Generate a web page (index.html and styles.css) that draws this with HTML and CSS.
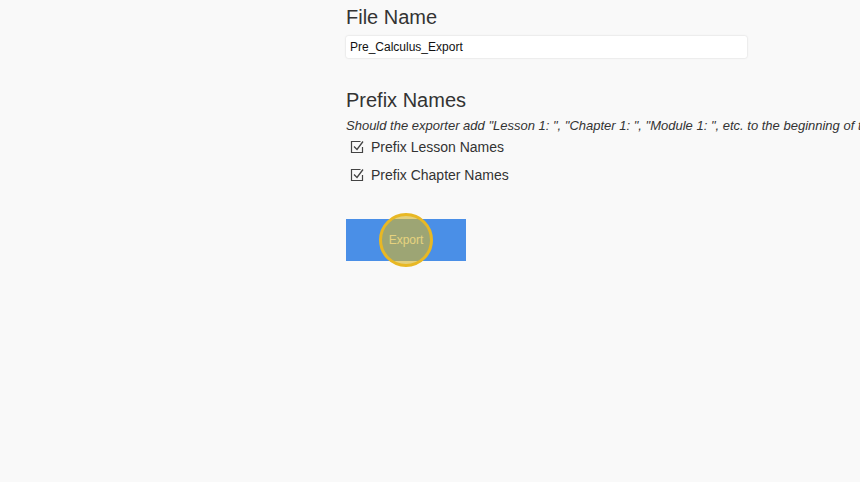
FILE: index.html
```html
<!DOCTYPE html>
<html>
<head>
<meta charset="utf-8">
<link rel="stylesheet" href="styles.css">
</head>
<body>
<main class="form">
  <section class="group">
    <h2 class="label">File Name</h2>
    <input class="text-input" type="text" value="Pre_Calculus_Export">
  </section>
  <section class="group prefix">
    <h2 class="label">Prefix Names</h2>
    <p class="hint">Should the exporter add "Lesson 1: ", "Chapter 1: ", "Module 1: ", etc. to the beginning of the names?</p>
    <label class="check">
      <svg class="box" viewBox="0 0 14 14" width="14" height="14"><path d="M10.5 1.5H1.5v11h11V7" fill="none" stroke="#444" stroke-width="1.2"/><path d="M4 6.5l3 3L13 1.5" fill="none" stroke="#444" stroke-width="1.3"/></svg>
      <span>Prefix Lesson Names</span>
    </label>
    <label class="check">
      <svg class="box" viewBox="0 0 14 14" width="14" height="14"><path d="M10.5 1.5H1.5v11h11V7" fill="none" stroke="#444" stroke-width="1.2"/><path d="M4 6.5l3 3L13 1.5" fill="none" stroke="#444" stroke-width="1.3"/></svg>
      <span>Prefix Chapter Names</span>
    </label>
  </section>
  <div class="actions">
    <button class="btn">Export<span class="spot"></span></button>
  </div>
</main>
</body>
</html>
```
FILE: styles.css
```css
html, body {
  margin: 0;
  padding: 0;
  background: #f9f9f9;
  overflow: hidden;
}
body {
  width: 860px;
  height: 482px;
  font-family: "Liberation Sans", Arial, sans-serif;
  color: #333;
}
.form {
  margin-left: 346px;
  padding-top: 5px;
  display: flex;
  flex-direction: column;
}
.label {
  margin: 0;
  font-size: 20px;
  font-weight: normal;
  line-height: 24px;
  color: #333;
}
.text-input {
  margin-top: 7px;
  box-sizing: border-box;
  width: 401px;
  height: 22px;
  border: none;
  border-radius: 2px;
  background: #fff;
  box-shadow: 0 0 2px rgba(0,0,0,0.18);
  padding: 0 4px;
  font-family: "Liberation Sans", Arial, sans-serif;
  font-size: 12px;
  color: #111;
  outline: none;
}
.prefix {
  margin-top: 30px;
  display: flex;
  flex-direction: column;
  white-space: nowrap;
  width: 514px;
  overflow: hidden;
}
.hint {
  margin: 6px 0 0;
  font-size: 13px;
  font-style: italic;
  line-height: 15px;
  color: #333;
}
.check {
  display: flex;
  align-items: center;
  gap: 7px;
  height: 28px;
  padding-left: 4px;
  font-size: 14px;
  color: #333;
}
.box {
  flex: none;
}
.actions {
  margin-top: 30px;
}
.btn {
  position: relative;
  width: 120px;
  height: 42px;
  border: none;
  background: #4a8fe7;
  color: #fff;
  font-family: "Liberation Sans", Arial, sans-serif;
  font-size: 12px;
  padding: 0;
}
.spot {
  position: absolute;
  left: 33px;
  top: -6px;
  width: 48px;
  height: 48px;
  border-radius: 50%;
  border: 3px solid #e8b824;
  background: rgba(214, 180, 40, 0.6);
}
```
